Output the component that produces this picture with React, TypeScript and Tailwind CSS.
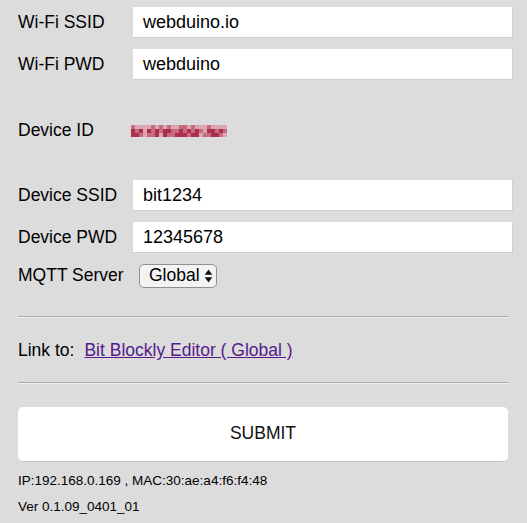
import React from "react";

const font = { fontFamily: '"Liberation Sans", Arial, Helvetica, sans-serif' };

function Row({ label, value, mt }: { label: string; value: string; mt: string }) {
  return (
    <div className={`flex items-center h-[31px] ${mt}`}>
      <div className="w-[115px] text-[17.5px] text-black leading-none">{label}</div>
      <div className="w-[380px] h-[31px] bg-white border-b border-[#cfcfcf] border-r flex items-center pl-[10px] text-[18px] text-black leading-none">
        {value}
      </div>
    </div>
  );
}

function Blur() {
  const rows = [
    "211112121211221211121111",
    "323132323322323232133232",
    "332122313223332331223321",
  ];
  const colors = ["#dcdcdc", "#dba6b2", "#c66c82", "#ad2f4c"];
  const cells: React.ReactNode[] = [];
  rows.forEach((r, y) =>
    r.split("").forEach((ch, x) => {
      const v = Number(ch);
      if (v > 0) cells.push(<rect key={`${x}-${y}`} x={x * 4} y={y * 4} width={4} height={4} fill={colors[v]} />);
    })
  );
  return (
    <svg width="96" height="12" viewBox="0 0 96 12" className="shrink-0 block w-[96px] h-[12px]">
      {cells}
    </svg>
  );
}

export default function App() {
  return (
    <div className="w-[527px] h-[523px] bg-[#dcdcdc] overflow-hidden pl-[18px] pt-[7px]" style={font}>
      <Row label="Wi-Fi SSID" value="webduino.io" mt="" />
      <Row label="Wi-Fi PWD" value="webduino" mt="mt-[11px]" />
      <div className="flex items-center h-[20px] mt-[41px]">
        <div className="w-[113px] text-[17.5px] text-black leading-none">Device ID</div>
        <Blur />
      </div>
      <Row label="Device SSID" value="bit1234" mt="mt-[39px]" />
      <Row label="Device PWD" value="12345678" mt="mt-[11px]" />
      <div className="flex items-center h-[24px] mt-[11px]">
        <div className="w-[121px] text-[17.5px] text-black leading-none">MQTT Server</div>
        <div className="w-[78px] h-[24px] bg-[#f3f3f3] border border-[#8f8f8f] rounded-[5px] flex items-center pl-[9px] text-[17.5px] text-black leading-none">
          Global
          <svg width="9" height="16" viewBox="0 0 9 16" className="ml-[4px]">
            <path d="M4.5 1.5 L8.3 6.8 L0.7 6.8 Z" fill="#111" />
            <path d="M4.5 14.5 L8.3 9.2 L0.7 9.2 Z" fill="#111" />
          </svg>
        </div>
      </div>
      <div className="w-[490px] h-[2px] bg-[#a9a9a9] border-b border-[#f2f2f2] mt-[28px]" />
      <div className="flex items-center h-[20px] mt-[23px] text-[17.5px] leading-none">
        <span className="text-black">Link to:</span>
        <a href="#" className="ml-[10px] text-[#551a8b] underline">Bit Blockly Editor ( Global )</a>
      </div>
      <div className="w-[490px] h-[2px] bg-[#a9a9a9] border-b border-[#f2f2f2] mt-[21px]" />
      <div className="w-[490px] h-[55px] mt-[23px] bg-white rounded-[5px] border-b border-[#c8c8c8] flex items-center justify-center text-[17.5px] text-[#111] leading-none">
        SUBMIT
      </div>
      <div className="mt-[12px] text-[13.5px] text-black leading-none h-[14px]">IP:192.168.0.169 , MAC:30:ae:a4:f6:f4:48</div>
      <div className="mt-[12px] text-[13.5px] text-black leading-none h-[14px]">Ver 0.1.09_0401_01</div>
    </div>
  );
}
